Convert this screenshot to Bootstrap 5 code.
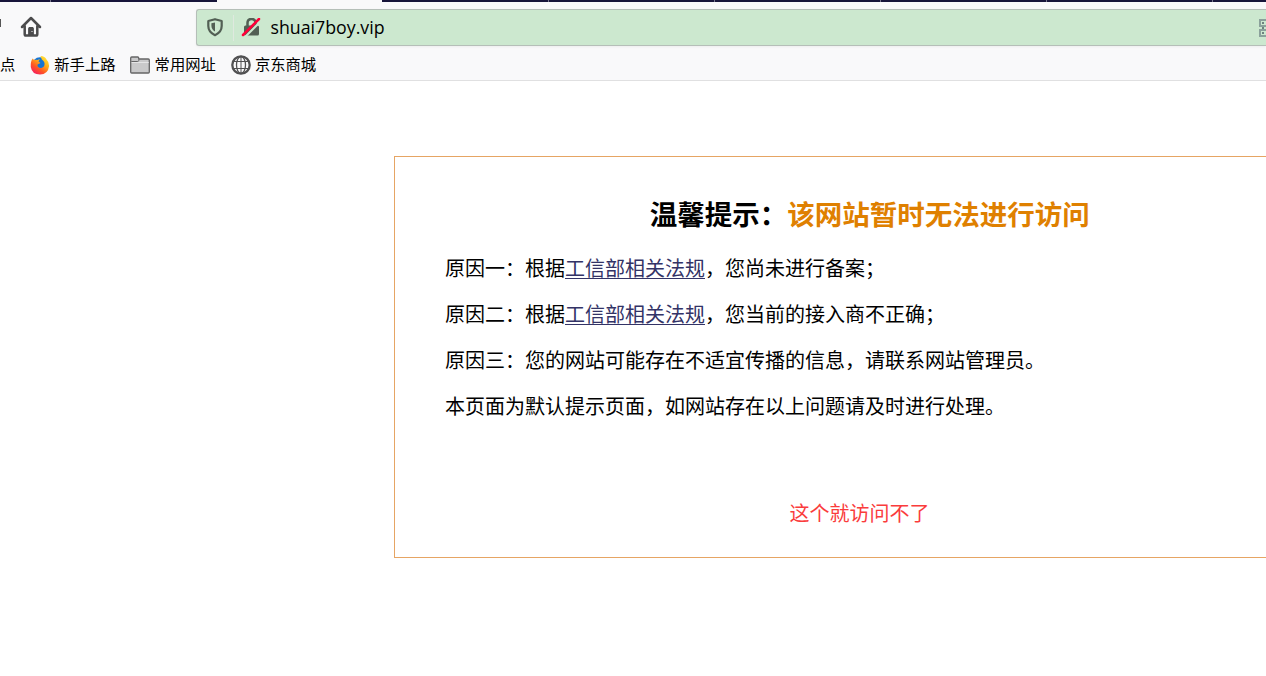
<!DOCTYPE html>
<html lang="zh-CN">
<head>
<meta charset="utf-8">
<meta name="viewport" content="width=device-width, initial-scale=1">
<title>shuai7boy.vip</title>
<link href="https://cdn.jsdelivr.net/npm/bootstrap@5.3.0/dist/css/bootstrap.min.css" rel="stylesheet">
<style>
body{font-family:"Noto Sans CJK SC",sans-serif;color:#000;height:676px}
svg{display:block;flex:none}
.tab-strip{height:2px;background:#17153a}
.tab-strip span{flex:none;width:166px;height:2px;border-right:1px solid #77768c}
.tab-strip .tab-first{width:51px}
.tab-strip .tab-rest{width:166px;border:0}
.tab-strip .tab-current{width:165px;background:#f9f9fa;border:0}
.tab-strip .tab-next{width:167px}
.tab-strip .tab-last{width:auto;flex:1;border:0}
.browser-bar{background:#f9f9fa;height:79px;border-bottom:1px solid #e0e0e1}
.tool-row{height:49px;padding-top:7px}
.reload-edge{width:1px;height:8px;background:#555;margin-top:10px}
.home-icon{margin:7px 0 0 19px}
.address{margin-left:154px;height:37px;background:#cce8cf;border:1px solid #b5bfb8;border-right:0;border-radius:3px 0 0 3px;box-shadow:0 1px 3px #0000000d}
.address-split{width:1px;height:26px;background:#dfe9df;margin:0 7px 0 8px}
.address-text{font:17.75px/34px "Open Sans","Noto Sans",sans-serif;margin:-2px 0 0 9.500px;white-space:nowrap}
.bookmarks{font-size:15.3px;line-height:24px;height:28px;white-space:nowrap}
.bookmarks span{width:61px;margin:-5px 14px 0 5px}
.bookmarks .cut-label{margin:-5px 14px 0 0;width:16px}
.bookmarks .folder{margin-left:1px}
.bookmarks .globe{margin-left:1px}
.bookmarks svg + span{margin-left:4.300px}
.notice{height:402px;margin:75px 0 0 394px;border:1px solid #e6a564;border-right:0;padding:36px 0 0 50px}
.notice h1{font-size:27.5px;line-height:40px;font-weight:700;margin:0 0 12px;padding-left:28.500px}
.notice h1 span{color:#df8000}
.notice p{font-size:20px;line-height:46px;margin:0}
.notice a{color:#333366;text-decoration-thickness:1px;text-underline-offset:2px}
.notice .remark{color:#fa3c3c;margin-top:61px;padding-left:8px}
</style>
</head>
<body class="overflow-hidden bg-white">
<header>
<div class="tab-strip d-flex"><span class="tab-first"></span><span class="tab-rest"></span><span class="tab-current"></span><span class="tab-next"></span><span></span><span></span><span></span><span></span><span class="tab-last"></span></div>
<div class="browser-bar">
<div class="tool-row d-flex align-items-start">
<div class="reload-edge"></div>
<svg class="home-icon" width="22" height="22" viewBox="0 0 22 22" fill="none" stroke="#4b4b4c" stroke-width="2.5" stroke-linecap="round" stroke-linejoin="round"><path d="M2 11 11 2l9 9M4.7 10v8.2q0 1.3 1.3 1.3h10q1.300 0 1.300-1.300V10"/><path d="M9 11h4v8H9z" fill="#4b4b4c" stroke="none"/><path d="M8.700 19v-6.500q0-1 1-1h2.600q1 0 1 1V19" stroke-width="1.200"/><path d="M11.500 15h1v1h-1z" fill="#f9f9fa" stroke="none"/></svg>
<div class="address d-flex align-items-center flex-grow-1">
<svg class="ms-2" width="20" height="20" viewBox="0 0 20 20"><path d="M10 1.200 16.700 3v5q0 6-6.700 9.200Q3.300 14 3.300 8V3z" fill="none" stroke="#525f54" stroke-width="2.200" stroke-linejoin="round"/><path d="M10 4.400v9.200Q6.400 11.300 6.400 7.700V5.300z" fill="#525f54"/></svg>
<div class="address-split"></div>
<svg width="20" height="20" viewBox="0 0 20 20"><path d="M6.500 8V5q0-4 4-4t4 4v3" fill="none" stroke="#525f54" stroke-width="2.500"/><rect x="3" y="7.500" width="15" height="10" rx="1.500" fill="#525f54"/><path d="m4 19 16-16" stroke="#cce8cf" stroke-width="2"/><path d="M2 17 18 1" stroke="#ff0039" stroke-width="2.500" stroke-linecap="round"/></svg>
<div class="address-text">shuai7boy.vip</div>
<svg class="ms-auto" width="7" height="18" viewBox="0 0 7 18" fill="none" stroke="#8ba19b" stroke-width="2"><path d="M8 1H1v6h7M8 11H1v6h7"/><path d="M3 3h2v2H3zM3 13h2v2H3zM3 8h2v2H3z" fill="#6d827f" stroke="none"/></svg>
</div>
</div>
<div class="bookmarks d-flex align-items-center">
<span class="cut-label">点</span>
<svg width="20" height="20" viewBox="0 0 20 20"><defs><linearGradient id="flame" x1=".9" y1="0" x2=".2" y2="1"><stop stop-color="#fff044"/><stop offset=".38" stop-color="#ffaf18"/><stop offset=".68" stop-color="#ff5724"/><stop offset="1" stop-color="#f51766"/></linearGradient></defs><circle cx="10" cy="10.500" r="8.200" fill="#1474d4"/><path d="M2.700 3.600 4 5.100Q6 4.300 7.500 5L9.800 4 8.500 6.400 10.500 8 7.600 9.500Q7 12 9.500 12.800 13.500 14 14.400 10.300 15.200 6.700 11.800 4.600L10.500 1Q15 1 16.500 4.500 19.300 7 19.100 11 18 19.500 10 19.600 2 19.500.8 12 .4 6.500 2.700 3.600" fill="url(#flame)"/></svg>
<span>新手上路</span>
<svg class="folder" width="20" height="20" viewBox="0 0 20 20"><path d="M.7 17V3q0-1 1-1h6q1 0 1 1v1h9.600q1 0 1 1v12q0 1-1 1H1.700q-1 0-1-1" fill="#c9c9ca" stroke="#656566" stroke-width="1.300"/><path d="M1.300 6.500h6.500L9.500 5" fill="none" stroke="#656566"/><path d="M1.700 7.500h17" stroke="#e4e4e5"/></svg>
<span>常用网址</span>
<svg class="globe" width="20" height="20" viewBox="0 0 20 20" fill="none" stroke="#515152"><circle cx="10" cy="10" r="8.700" stroke-width="2.300"/><ellipse cx="10" cy="10" rx="4.500" ry="8.500" stroke-width="1.300"/><path d="M10 1v18M2 6.500h16M2 13.500h16" stroke-width="1"/></svg>
<span>京东商城</span>
</div>
</div>
</header>
<main class="notice">
<h1 class="text-center">温馨提示：<span>该网站暂时无法进行访问</span></h1>
<p>原因一：根据<a href="#">工信部相关法规</a>，您尚未进行备案；</p>
<p>原因二：根据<a href="#">工信部相关法规</a>，您当前的接入商不正确；</p>
<p>原因三：您的网站可能存在不适宜传播的信息，请联系网站管理员。</p>
<p>本页面为默认提示页面，如网站存在以上问题请及时进行处理。</p>
<p class="remark text-center">这个就访问不了</p>
</main>
<script src="https://cdn.jsdelivr.net/npm/bootstrap@5.3.0/dist/js/bootstrap.bundle.min.js"></script>
</body>
</html>
